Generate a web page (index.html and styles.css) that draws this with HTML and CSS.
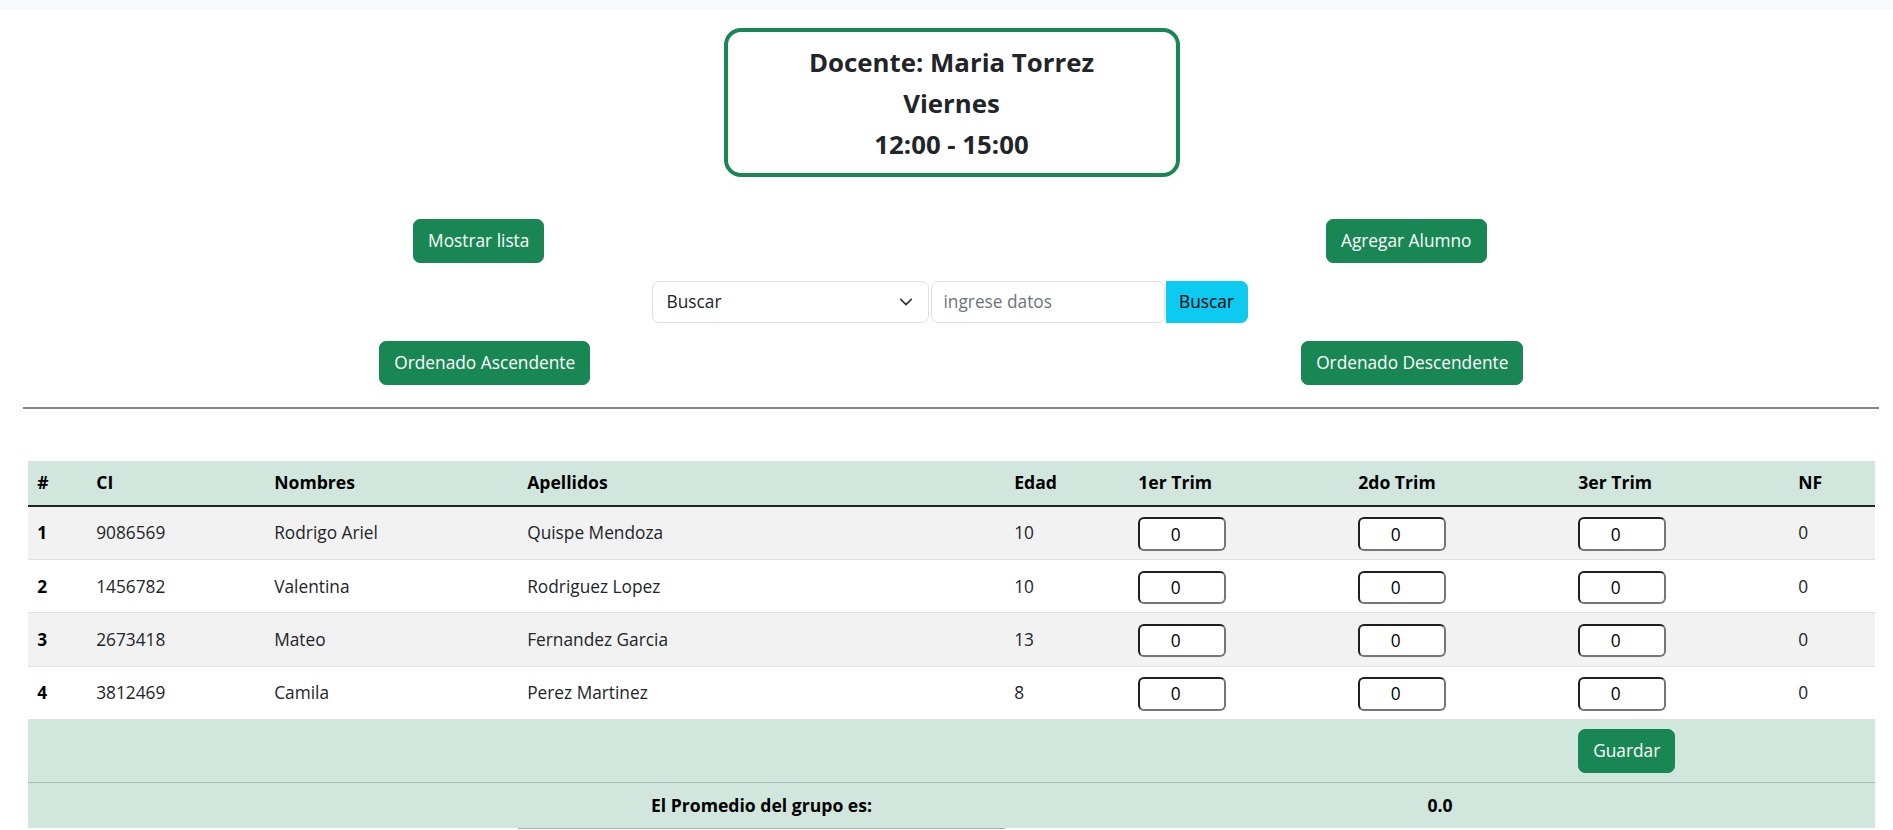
FILE: index.html
```html
<!DOCTYPE html>
<html lang="es">
<head>
<meta charset="utf-8">
<title>Docente</title>
<link rel="stylesheet" href="styles.css">
</head>
<body>
<div class="topbar"></div>
<main class="page">
  <section class="teacher-card">
    <h3 class="card-line">Docente: Maria Torrez</h3>
    <h3 class="card-line">Viernes</h3>
    <h3 class="card-line">12:00 - 15:00</h3>
  </section>

  <div class="btn-row first">
    <div class="btn-cell"><button class="btn btn-success">Mostrar lista</button></div>
    <div class="btn-cell"><button class="btn btn-success">Agregar Alumno</button></div>
  </div>

  <div class="search-row">
    <div class="select-wrap">
      <select class="search-select">
        <option>Buscar</option>
      </select>
      <svg class="chevron" viewBox="0 0 16 16" width="18" height="14"><path fill="none" stroke="#343a40" stroke-linecap="round" stroke-linejoin="round" stroke-width="2" d="m2 5 6 6 6-6"/></svg>
    </div>
    <input class="search-input" type="text" placeholder="ingrese datos">
    <button class="btn-info">Buscar</button>
  </div>

  <div class="btn-row second">
    <div class="btn-cell"><button class="btn btn-success">Ordenado Ascendente</button></div>
    <div class="btn-cell"><button class="btn btn-success">Ordenado Descendente</button></div>
  </div>

  <hr class="divider">

  <table class="grades">
    <colgroup>
      <col class="c-num"><col class="c-ci"><col class="c-nom"><col class="c-ape"><col class="c-edad">
      <col class="c-trim"><col class="c-trim"><col class="c-trim"><col class="c-nf">
    </colgroup>
    <thead>
      <tr>
        <th>#</th><th>CI</th><th>Nombres</th><th>Apellidos</th><th>Edad</th>
        <th>1er Trim</th><th>2do Trim</th><th>3er Trim</th><th>NF</th>
      </tr>
    </thead>
    <tbody>
      <tr class="odd">
        <th>1</th><td>9086569</td><td>Rodrigo Ariel</td><td>Quispe Mendoza</td><td>10</td>
        <td><input class="grade" type="text" value="0"></td>
        <td><input class="grade" type="text" value="0"></td>
        <td><input class="grade" type="text" value="0"></td>
        <td>0</td>
      </tr>
      <tr>
        <th>2</th><td>1456782</td><td>Valentina</td><td>Rodriguez Lopez</td><td>10</td>
        <td><input class="grade" type="text" value="0"></td>
        <td><input class="grade" type="text" value="0"></td>
        <td><input class="grade" type="text" value="0"></td>
        <td>0</td>
      </tr>
      <tr class="odd">
        <th>3</th><td>2673418</td><td>Mateo</td><td>Fernandez Garcia</td><td>13</td>
        <td><input class="grade" type="text" value="0"></td>
        <td><input class="grade" type="text" value="0"></td>
        <td><input class="grade" type="text" value="0"></td>
        <td>0</td>
      </tr>
      <tr>
        <th>4</th><td>3812469</td><td>Camila</td><td>Perez Martinez</td><td>8</td>
        <td><input class="grade" type="text" value="0"></td>
        <td><input class="grade" type="text" value="0"></td>
        <td><input class="grade" type="text" value="0"></td>
        <td>0</td>
      </tr>
    </tbody>
    <tfoot>
      <tr class="save-row">
        <td colspan="7"></td>
        <td><button class="btn btn-success">Guardar</button></td>
        <td></td>
      </tr>
      <tr class="avg-row">
        <td colspan="3"></td>
        <th class="avg-label">El Promedio del grupo es:</th>
        <th class="avg-value" colspan="5">0.0</th>
      </tr>
    </tfoot>
  </table>
</main>
</body>
</html>
```
FILE: styles.css
```css
* { box-sizing: border-box; }

body {
  margin: 0;
  font-family: "Open Sans", "Noto Sans", sans-serif;
  font-size: 17.3px;
  line-height: 27.6px;
  color: #212529;
  background: #fff;
  overflow: hidden;
}

.topbar {
  height: 10px;
  background: #f8f9fa;
}

.page {
  padding: 18px 18px 0 28px;
}

/* teacher card */
.teacher-card {
  width: 456px;
  margin: 0 auto;
  border: 4px solid #198754;
  border-radius: 17px;
  padding: 10px 0 8px;
  text-align: center;
}

.card-line {
  margin: 0;
  font-size: 25.8px;
  line-height: 41px;
  font-weight: 700;
  color: #212529;
}

/* buttons */
.btn {
  font-family: inherit;
  font-size: 17.3px;
  line-height: 27.6px;
  padding: 7.2px 14px;
  border: 1px solid transparent;
  border-radius: 7px;
  cursor: pointer;
}

.btn-success {
  background: #198754;
  border-color: #198754;
  color: #fff;
}

.btn-row {
  display: grid;
  grid-template-columns: 1fr 1fr;
}

.btn-row.first { margin: 42px 5px 0 -13px; }
.btn-row.second { margin: 18px -1px 0 -7px; }

.btn-cell {
  display: flex;
  justify-content: center;
}

/* search */
.search-row {
  display: flex;
  justify-content: center;
  gap: 2px;
  margin-top: 18px;
  padding-right: 4px;
  height: 42px;
}

.select-wrap {
  position: relative;
  width: 277px;
}

.search-select {
  width: 100%;
  height: 42px;
  appearance: none;
  -webkit-appearance: none;
  background: #fff;
  border: 1px solid #dee2e6;
  border-radius: 7px;
  padding: 0 40px 0 14px;
  font-family: inherit;
  font-size: 17.3px;
  color: #212529;
}

.chevron {
  position: absolute;
  right: 14px;
  top: 14px;
  pointer-events: none;
}

.search-input {
  width: 234px;
  height: 42px;
  border: 1px solid #dee2e6;
  border-radius: 7px;
  padding: 0 12px;
  font-family: inherit;
  font-size: 17.3px;
  color: #212529;
}

.search-input::placeholder { color: #6c757d; }

.btn-info {
  width: 82px;
  height: 42px;
  margin-left: -1px;
  background: #0dcaf0;
  border: 1px solid #0dcaf0;
  border-radius: 0 7px 7px 0;
  color: #000;
  font-family: inherit;
  font-size: 17.3px;
  padding: 0;
}

/* divider */
.divider {
  margin: 22px -4px 0 -5px;
  height: 2px;
  border: 0;
  background: #858585;
}

/* table */
.grades {
  width: 1847px;
  margin-top: 52px;
  border-collapse: collapse;
  table-layout: fixed;
}

.c-num { width: 59px; }
.c-ci { width: 178px; }
.c-nom { width: 253px; }
.c-ape { width: 487px; }
.c-edad { width: 124px; }
.c-trim { width: 220px; }
.c-nf { width: 86px; }

.grades th,
.grades td {
  text-align: left;
  vertical-align: top;
  padding: 10.5px 9.2px 8.4px;
  line-height: 31px;
}

.grades thead tr { background: #d1e7dd; }

.grades thead th {
  color: #000;
  font-size: 17.6px;
  font-weight: 700;
  line-height: 27.6px;
  padding: 8.2px 9.2px;
  border-bottom: 2px solid #212529;
}

.grades tbody tr {
  border-bottom: 1px solid #dee2e6;
}

.grades tbody tr.odd { background: #f2f2f2; }

.grades tbody th {
  font-weight: 700;
  color: #000;
}

.grade {
  display: block;
  width: 88px;
  height: 33.4px;
  border-style: solid;
  border-width: 2px;
  border-color: #1f1f1f #767676 #767676 #1f1f1f;
  border-radius: 6px;
  background: #fff;
  padding: 0 15px 0 2px;
  text-align: center;
  font-family: inherit;
  font-size: 17.3px;
  color: #000;
}

.grades tfoot tr { background: #d1e7dd; }

.save-row td {
  padding: 9.2px;
  border-bottom: 1px solid #a8bab2;
}

.save-row .btn {
  height: 43.6px;
  padding-top: 0;
  padding-bottom: 0;
}

.avg-row td,
.avg-row th {
  padding: 9.2px 9.2px 8.2px;
  line-height: 27.6px;
  color: #000;
  font-weight: 700;
  font-size: 17.6px;
}

.avg-row .avg-label {
  text-align: center;
  border-bottom: 1px solid #aab3af;
}

.avg-row .avg-value { text-align: center; }
```
